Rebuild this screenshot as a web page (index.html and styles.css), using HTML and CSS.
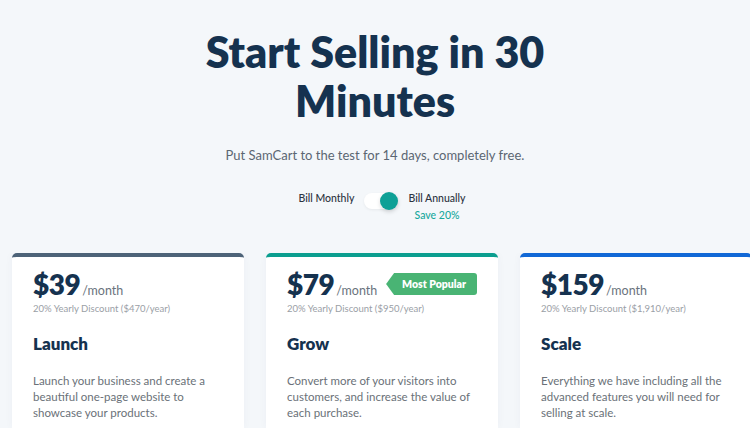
FILE: index.html
```html
<!DOCTYPE html>
<html>
<head>
<meta charset="utf-8">
<link rel="stylesheet" href="styles.css">
</head>
<body>
<div class="page">
  <h1 class="title">Start Selling in 30<br>Minutes</h1>
  <p class="subtitle">Put SamCart to the test for 14 days, completely free.</p>
  <div class="billing">
    <span class="bill-label">Bill Monthly</span>
    <span class="toggle"><span class="knob"></span></span>
    <span class="bill-annual">
      <span class="bill-label">Bill Annually</span>
      <span class="save">Save 20%</span>
    </span>
  </div>
  <div class="cards">
    <div class="card card-launch">
      <div class="price-row"><span class="price">$39</span><span class="per">/month</span></div>
      <div class="discount">20% Yearly Discount ($470/year)</div>
      <h2 class="plan">Launch</h2>
      <p class="desc">Launch your business and create a beautiful one-page website to showcase your products.</p>
    </div>
    <div class="card card-grow">
      <div class="price-row"><span class="price">$79</span><span class="per">/month</span><span class="badge">Most Popular</span></div>
      <div class="discount">20% Yearly Discount ($950/year)</div>
      <h2 class="plan">Grow</h2>
      <p class="desc">Convert more of your visitors into customers, and increase the value of each purchase.</p>
    </div>
    <div class="card card-scale">
      <div class="price-row"><span class="price">$159</span><span class="per">/month</span></div>
      <div class="discount">20% Yearly Discount ($1,910/year)</div>
      <h2 class="plan">Scale</h2>
      <p class="desc">Everything we have including all the advanced features you will need for selling at scale.</p>
    </div>
  </div>
</div>
</body>
</html>
```
FILE: styles.css
```css
html, body {
  margin: 0;
  padding: 0;
  background: #f4f7fa;
  overflow: hidden;
}
body {
  font-family: "Lato", "Liberation Sans", sans-serif;
  color: #15324f;
}
.page {
  width: 750px;
  height: 428px;
  display: flex;
  flex-direction: column;
  align-items: center;
  overflow: hidden;
}
.title {
  margin: 27px 0 0;
  font-size: 43px;
  line-height: 49px;
  font-weight: 800;
  text-align: center;
  color: #15324f;
}
.subtitle {
  margin: 21px 0 0;
  font-size: 13px;
  line-height: 18px;
  color: #5b6672;
}
.billing {
  margin-top: 26px;
  display: flex;
  align-items: flex-start;
  gap: 10px;
  margin-left: 14px;
}
.bill-label {
  font-size: 10.5px;
  line-height: 16px;
  color: #2c3440;
  font-weight: 500;
}
.toggle {
  position: relative;
  width: 34px;
  height: 16px;
  margin-top: 3px;
  background: #ffffff;
  border-radius: 8px;
  box-shadow: 0 1px 3px rgba(0,0,0,0.06);
}
.knob {
  position: absolute;
  right: 0;
  top: -1px;
  width: 18px;
  height: 18px;
  border-radius: 50%;
  background: #0ea096;
  box-shadow: 0 2px 4px rgba(0,0,0,0.15);
}
.bill-annual {
  display: flex;
  flex-direction: column;
  align-items: center;
}
.save {
  margin-top: 1px;
  font-size: 10.5px;
  line-height: 16px;
  color: #16a89c;
  font-weight: 500;
}
.cards {
  align-self: stretch;
  flex: 1;
  min-height: 0;
  display: flex;
  align-items: stretch;
  gap: 22px;
  padding-left: 12px;
  margin-top: 30px;
  overflow: hidden;
}
.card {
  flex: none;
  width: 232px;
  box-sizing: border-box;
  background: #ffffff;
  border-top: 4px solid #4d6378;
  border-radius: 5px 5px 0 0;
  padding: 11px 21px 0;
  box-shadow: 0 0 8px rgba(30,60,90,0.04);
}
.card-grow { border-top-color: #0b9e8f; }
.card-scale { border-top-color: #1168d6; }
.price-row {
  position: relative;
  display: flex;
  align-items: baseline;
  height: 32px;
}
.price {
  font-size: 28px;
  line-height: 32px;
  font-weight: 800;
  color: #15324f;
  letter-spacing: -0.5px;
}
.per {
  font-size: 12.5px;
  color: #6a737d;
  margin-left: 2px;
}
.badge {
  position: absolute;
  right: 0;
  top: 5px;
  height: 22px;
  line-height: 22px;
  padding: 0 11px 0 16px;
  background: #49b474;
  color: #ffffff;
  font-size: 10.5px;
  font-weight: 800;
  border-radius: 3px;
  clip-path: polygon(8px 0, 100% 0, 100% 100%, 8px 100%, 0 50%);
}
.discount {
  margin-top: 3px;
  font-size: 9.5px;
  line-height: 12px;
  color: #9aa0a6;
}
.plan {
  margin: 18px 0 0;
  font-size: 17px;
  line-height: 22px;
  font-weight: 800;
  color: #15324f;
}
.desc {
  margin: 18px 0 0;
  font-size: 11.5px;
  line-height: 16px;
  color: #6a7178;
}
```
